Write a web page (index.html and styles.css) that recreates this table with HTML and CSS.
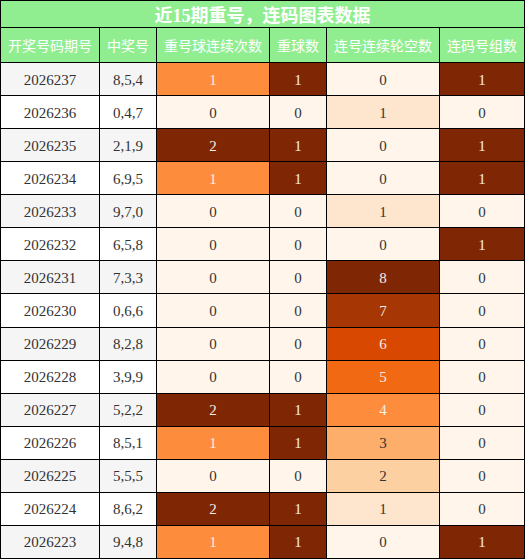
FILE: index.html
```html
<!DOCTYPE html>
<html lang="zh">
<head>
<meta charset="utf-8">
<link rel="stylesheet" href="styles.css">
</head>
<body>
<div class="grid">
  <div class="title">近15期重号，连码图表数据</div>
  <div class="hd">开奖号码期号</div><div class="hd">中奖号</div><div class="hd">重号球连续次数</div><div class="hd">重球数</div><div class="hd">连号连续轮空数</div><div class="hd">连码号组数</div>

  <div class="id odd">2026237</div><div class="id odd">8,5,4</div><div class="c4">1</div><div class="c8">1</div><div class="c0">0</div><div class="c8">1</div>
  <div class="id">2026236</div><div class="id">0,4,7</div><div class="c0">0</div><div class="c0">0</div><div class="c1">1</div><div class="c0">0</div>
  <div class="id odd">2026235</div><div class="id odd">2,1,9</div><div class="c8">2</div><div class="c8">1</div><div class="c0">0</div><div class="c8">1</div>
  <div class="id">2026234</div><div class="id">6,9,5</div><div class="c4">1</div><div class="c8">1</div><div class="c0">0</div><div class="c8">1</div>
  <div class="id odd">2026233</div><div class="id odd">9,7,0</div><div class="c0">0</div><div class="c0">0</div><div class="c1">1</div><div class="c0">0</div>
  <div class="id">2026232</div><div class="id">6,5,8</div><div class="c0">0</div><div class="c0">0</div><div class="c0">0</div><div class="c8">1</div>
  <div class="id odd">2026231</div><div class="id odd">7,3,3</div><div class="c0">0</div><div class="c0">0</div><div class="c8">8</div><div class="c0">0</div>
  <div class="id">2026230</div><div class="id">0,6,6</div><div class="c0">0</div><div class="c0">0</div><div class="c7">7</div><div class="c0">0</div>
  <div class="id odd">2026229</div><div class="id odd">8,2,8</div><div class="c0">0</div><div class="c0">0</div><div class="c6">6</div><div class="c0">0</div>
  <div class="id">2026228</div><div class="id">3,9,9</div><div class="c0">0</div><div class="c0">0</div><div class="c5">5</div><div class="c0">0</div>
  <div class="id odd">2026227</div><div class="id odd">5,2,2</div><div class="c8">2</div><div class="c8">1</div><div class="c4">4</div><div class="c0">0</div>
  <div class="id">2026226</div><div class="id">8,5,1</div><div class="c4">1</div><div class="c8">1</div><div class="c3">3</div><div class="c0">0</div>
  <div class="id odd">2026225</div><div class="id odd">5,5,5</div><div class="c0">0</div><div class="c0">0</div><div class="c2">2</div><div class="c0">0</div>
  <div class="id">2026224</div><div class="id">8,6,2</div><div class="c8">2</div><div class="c8">1</div><div class="c1">1</div><div class="c0">0</div>
  <div class="id odd">2026223</div><div class="id odd">9,4,8</div><div class="c4">1</div><div class="c8">1</div><div class="c0">0</div><div class="c8">1</div>
</div>
</body>
</html>
```

FILE: styles.css
```css
html, body {
  margin: 0;
  padding: 0;
  background: #fff;
}
.grid {
  width: 523px;
  display: grid;
  grid-template-columns: 98px 56px 112px 56px 112px 84px;
  grid-template-rows: 26px 34px;
  grid-auto-rows: 32.07px;
  gap: 1px;
  padding: 1px;
  background: #000;
  font-family: "Liberation Serif", "Noto Sans CJK SC", serif;
  font-size: 15px;
  color: #333;
}
.grid > div {
  display: flex;
  align-items: center;
  justify-content: center;
  white-space: nowrap;
  overflow: hidden;
  padding-top: 2px;
  box-sizing: border-box;
}
.grid > .title,
.grid > .hd {
  padding-top: 0;
}
.title {
  grid-column: 1 / -1;
  background: #90ee90;
  color: #fff;
  font-weight: bold;
  font-size: 18px;
}
.hd {
  background: #90ee90;
  color: #fff;
  font-family: "Noto Sans CJK SC", sans-serif;
  font-size: 14px;
}
.id { background: #fff; }
.id.odd { background: #f5f5f5; }
.c0 { background: #fff5eb; }
.c1 { background: #fee6ce; }
.c2 { background: #fdd0a2; }
.c3 { background: #fdae6b; }
.c4 { background: #fd8d3c; color: #f4ede6; }
.c5 { background: #f16913; color: #f4ede6; }
.c6 { background: #d94801; color: #f4ede6; }
.c7 { background: #a63603; color: #f4ede6; }
.c8 { background: #7f2704; color: #f4ede6; }
```
